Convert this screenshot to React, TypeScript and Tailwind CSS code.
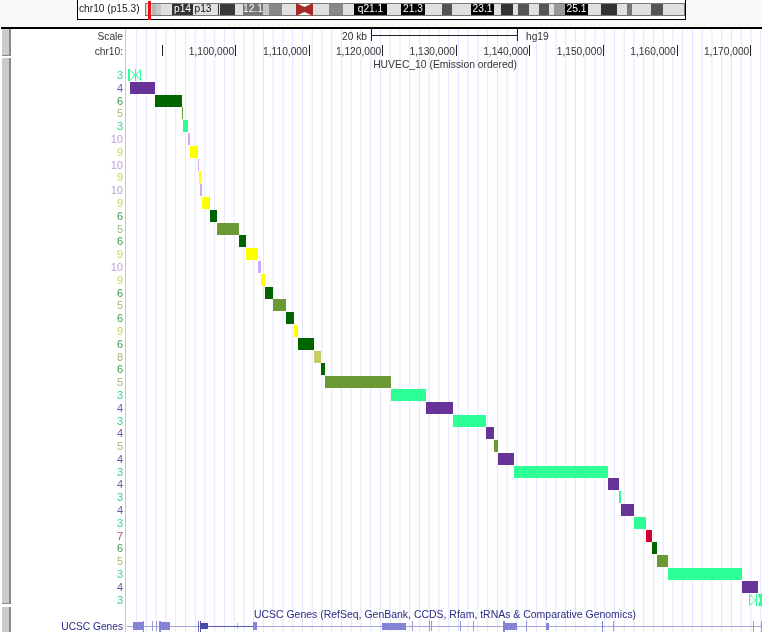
const stateColors: Record<number, { bar: string; label: string }> = {
  3: { bar: "#2dff96", label: "#3fcf8c" },
  4: { bar: "#663399", label: "#7452a8" },
  5: { bar: "#6b9a35", label: "#9dbd7c" },
  6: { bar: "#006400", label: "#3c9a52" },
  7: { bar: "#cc0033", label: "#cf4060" },
  8: { bar: "#cccc66", label: "#b3b36e" },
  9: { bar: "#ffff00", label: "#cfcf58" },
  10: { bar: "#cfa8ff", label: "#bb9fdc" },
};

// state, start x, end x
const rows: [number, number, number][] = [
  [3, 128, 141],
  [4, 130, 155],
  [6, 155, 181.5],
  [5, 181.5, 183],
  [3, 183, 188],
  [10, 188, 189.5],
  [9, 189.5, 198],
  [10, 198, 199],
  [9, 199, 201],
  [10, 200, 202],
  [9, 202, 209.5],
  [6, 209.5, 217],
  [5, 217, 239],
  [6, 239, 246],
  [9, 246, 258],
  [10, 258, 261],
  [9, 261, 265],
  [6, 265, 273],
  [5, 273, 286],
  [6, 286, 293.5],
  [9, 293.5, 298],
  [6, 298, 314],
  [8, 314, 321],
  [6, 321, 324.5],
  [5, 324.5, 391],
  [3, 391, 426],
  [4, 426, 453],
  [3, 453, 485.5],
  [4, 485.5, 494],
  [5, 494, 498],
  [4, 498, 513.5],
  [3, 513.5, 608],
  [4, 608, 619],
  [3, 619, 620.5],
  [4, 620.5, 634],
  [3, 634, 646],
  [7, 646, 652],
  [6, 652, 657],
  [5, 657, 668],
  [3, 668, 742],
  [4, 742, 758],
  [3, 749, 762],
];

const bands: { w: number; c: string; t?: string }[] = [
  { w: 6, c: "#e0e0e0" },
  { w: 4, c: "#b8b8b8" },
  { w: 5, c: "#c8c8c8" },
  { w: 11, c: "#e0e0e0" },
  { w: 21, c: "#333333", t: "p14" },
  { w: 20, c: "#e0e0e0", t: "p13" },
  { w: 5, c: "#e0e0e0" },
  { w: 1, c: "#333333" },
  { w: 1, c: "#e0e0e0" },
  { w: 15, c: "#3a3a3a" },
  { w: 8, c: "#e0e0e0" },
  { w: 20, c: "#777777", t: "12.1" },
  { w: 6, c: "#c8c8c8" },
  { w: 13, c: "#888888" },
  { w: 14, c: "#e0e0e0" },
];

const bandsQ: { w: number; c: string; t?: string }[] = [
  { w: 16, c: "#e0e0e0" },
  { w: 14, c: "#888888" },
  { w: 11, c: "#e0e0e0" },
  { w: 33, c: "#000000", t: "q21.1" },
  { w: 14, c: "#e0e0e0" },
  { w: 24, c: "#000000", t: "21.3" },
  { w: 17, c: "#e0e0e0" },
  { w: 10, c: "#555555" },
  { w: 19, c: "#e0e0e0" },
  { w: 23, c: "#000000", t: "23.1" },
  { w: 7, c: "#e0e0e0" },
  { w: 12, c: "#333333" },
  { w: 5, c: "#e0e0e0" },
  { w: 11, c: "#555555" },
  { w: 10, c: "#e0e0e0" },
  { w: 10, c: "#555555" },
  { w: 5, c: "#e0e0e0" },
  { w: 11, c: "#999999" },
  { w: 23, c: "#000000", t: "25.1" },
  { w: 13, c: "#e0e0e0" },
  { w: 16, c: "#333333" },
  { w: 10, c: "#e0e0e0" },
  { w: 5, c: "#777777" },
  { w: 19, c: "#e0e0e0" },
  { w: 12, c: "#555555" },
  { w: 21, c: "#e0e0e0" },
];

const positions = ["1,100,000", "1,110,000", "1,120,000", "1,130,000", "1,140,000", "1,150,000", "1,160,000", "1,170,000"];

const gridLines = Array.from({ length: 65 }, (_, i) => 136.7 + i * 9.75);

// exons of the gene track: x, width, top, height
const exons: [number, number, number, number][] = [
  [133, 10, 1, 8], [143, 1, 0, 12], [152, 0.8, 0, 10], [156, 0.8, 0, 10], [159, 2, 0, 12], [161, 9, 1, 8],
  [198, 0.8, 0, 12], [200, 1, 0, 12], [201, 7, 2, 6], [237, 0.7, 2, 6], [253, 4, 1, 8],
  [382, 24, 2, 7], [412, 0.8, 0, 10], [429, 0.8, 0, 10], [431, 0.8, 0, 10], [460, 0.8, 0, 10], [473, 0.8, 0, 10],
  [503, 2, 0, 12], [505, 12, 2, 7], [526, 0.8, 0, 10], [546, 3, 2, 7], [602, 1, 0, 12], [613, 0.8, 0, 10], [753, 0.8, 0, 12], [761, 0.8, 0, 12],
];

function BandRun({ items }: { items: { w: number; c: string; t?: string }[] }) {
  return (
    <>
      {items.map((b, i) => (
        <div
          key={i}
          className="h-full shrink-0 flex items-center justify-center overflow-visible"
          style={{ width: b.w, backgroundColor: b.c, color: b.c === "#e0e0e0" ? "#111111" : "#ffffff" }}
        >
          {b.t}
        </div>
      ))}
    </>
  );
}

function Ideogram() {
  return (
    <div className="flex items-start w-[609px] h-[20px] ml-[77px] bg-white border-x border-b border-black pl-[1px]">
      <span className="w-[66px] shrink-0 leading-[18px] text-[#222222]">chr10 (p15.3)</span>
      <div className="relative flex items-center h-[13px] mt-[3px] w-[540px] shrink-0 border border-[#777777] leading-none">
        <BandRun items={bands} />
        <svg width="17" height="13" viewBox="0 0 17 13" className="shrink-0">
          <path d="M0 0 L8.5 4 L17 0 L17 13 L8.5 9 L0 13 Z" fill="#a52a2a" />
        </svg>
        <BandRun items={bandsQ} />
        <div className="absolute left-[2px] -top-[3px] w-[3px] h-[19px] bg-[#ee1111]" />
      </div>
    </div>
  );
}

function HollowBar({ flip }: { flip?: boolean }) {
  const stroke = "#2dff96";
  if (flip) {
    return (
      <svg width="13" height="12" viewBox="0 0 13 12" className="block">
        <path d="M0.5 0.5 L7 6 L0.5 11.5 Z M7.5 0 L7.5 12" fill="none" stroke={stroke} />
        <path d="M9 0 H13 V12 H9 L11 6 Z" fill={stroke} />
      </svg>
    );
  }
  return (
    <svg width="13" height="12" viewBox="0 0 13 12" className="block">
      <rect x="0" y="0" width="2" height="12" fill={stroke} />
      <path d="M2 0.5 L7 6 L2 11.5 M7.5 0 V12 M12.5 0.5 L8 6 L12.5 11.5 Z" fill="none" stroke={stroke} />
    </svg>
  );
}

export default function App() {
  return (
    <div className="relative w-[762px] h-[632px] overflow-hidden bg-white text-[10.2px] text-[#333333] font-['Liberation_Sans',Arial,sans-serif] blur-[0.3px]">
      <header className="h-[27px] bg-[#f8f8f6]">
        <Ideogram />
      </header>

      <main className="relative flex h-[605px] ml-[1px] border-t-2 border-black">
        <svg width="761" height="603" viewBox="1 29 761 603" className="absolute left-0 top-0">
          {gridLines.map((x, i) => (
            <line key={i} x1={x} x2={x} y1="29" y2="632" stroke="#e4e4ff" />
          ))}
          <line x1="125.5" x2="125.5" y1="29" y2="632" stroke="#f3b4b4" />
        </svg>

        <aside className="relative flex flex-col gap-[2px] w-[10px] pl-[1px] shrink-0">
          <div className="h-[27px] bg-[#cccccc] border-r-2 border-b border-[#888888]" />
          <div className="h-[547px] bg-[#cccccc] border-r-2 border-b border-[#888888]" />
          <div className="h-[25px] mt-[1px] bg-[#cccccc] border-r-2 border-[#888888]" />
        </aside>

        <div className="relative flex-1 min-w-0">
          <div className="flex h-[14px] leading-[15px]">
            <div className="w-[112px] text-right shrink-0">Scale</div>
            <div className="w-[219px] shrink-0" />
            <span className="w-[29px] shrink-0">20 kb</span>
            <div className="flex items-center w-[147px] h-[12px] shrink-0 border-x border-[#222222]">
              <div className="w-full h-px bg-[#222222]" />
            </div>
            <span className="ml-[8px]">hg19</span>
          </div>

          <div className="flex h-[14px] leading-[17px]">
            <div className="w-[112px] text-right shrink-0">chr10:</div>
            <div className="w-[39.5px] h-[11px] mt-[2px] shrink-0 border-r border-[#222222]" />
            {positions.map((p) => (
              <div key={p} className="w-[73.6px] h-[11px] mt-[2px] shrink-0 border-r border-[#222222] text-right pr-[1px] leading-[13px]">
                {p}
              </div>
            ))}
          </div>

          <div className="flex h-[11.6px] leading-[15px] text-[10.35px]">
            <div className="w-[112px] shrink-0" />
            <div className="flex-1 text-center pl-[5px]">HUVEC_10 (Emission ordered)</div>
          </div>

          <div className="flex flex-col">
            {rows.map(([state, start, end], i) => {
              const colors = stateColors[state];
              const isHollow = i === 0 || i === rows.length - 1;
              return (
                <div key={i} className="flex items-center h-[12.8px]">
                  <div className="w-[112px] shrink-0 text-right text-[11px] leading-none pt-[1px]" style={{ color: colors.label }}>
                    {state}
                  </div>
                  {isHollow ? (
                    <div className="shrink-0" style={{ marginLeft: start - 123 }}>
                      <HollowBar flip={i !== 0} />
                    </div>
                  ) : (
                    <div
                      className="h-[12px] shrink-0"
                      style={{ marginLeft: start - 123, width: end - start, backgroundColor: colors.bar }}
                    />
                  )}
                </div>
              );
            })}
          </div>

          <div className="flex h-[13px] mt-[1.6px] leading-[13px] text-[#2b2b85] text-[10.47px]">
            <div className="w-[112px] shrink-0" />
            <div className="flex-1 text-center pl-[5px]">
              UCSC Genes (RefSeq, GenBank, CCDS, Rfam, tRNAs &amp; Comparative Genomics)
            </div>
          </div>
          <div className="flex h-[12px] leading-[12px] text-[#2b2b85]">
            <div className="w-[112px] shrink-0 text-right">UCSC Genes</div>
            <svg width="639" height="12" viewBox="123 0 639 12" className="shrink-0">
              <line x1="127" x2="762" y1="5.5" y2="5.5" stroke="#a8a8e0" />
              <line x1="200" x2="255" y1="5.5" y2="5.5" stroke="#5a5ab8" />
              {exons.map(([x, w, y, h], i) => (
                <rect key={i} x={x} y={y} width={w} height={h} fill={x >= 198 && x < 202 ? "#4a4aa8" : "#8484d4"} />
              ))}
            </svg>
          </div>
        </div>
      </main>
    </div>
  );
}
